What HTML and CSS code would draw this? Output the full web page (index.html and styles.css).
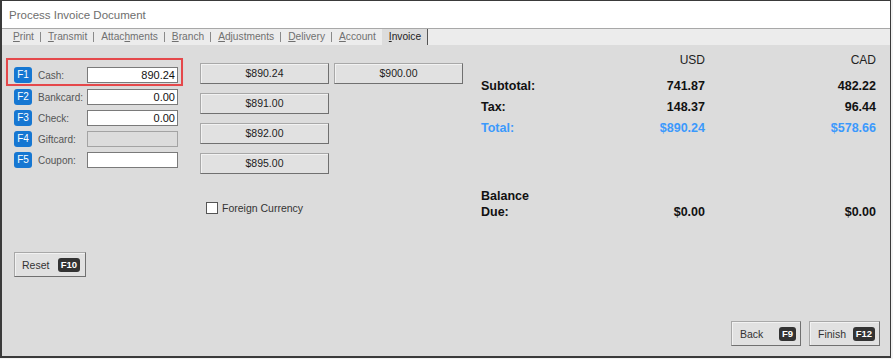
FILE: index.html
```html
<!DOCTYPE html>
<html>
<head>
<meta charset="utf-8">
<link rel="stylesheet" href="styles.css">
</head>
<body>
<div class="window">
  <div class="titlebar">Process Invoice Document</div>
  <div class="tabs">
    <span class="tab"><u>P</u>rint</span><span class="sep"></span>
    <span class="tab"><u>T</u>ransmit</span><span class="sep"></span>
    <span class="tab">Attac<u>h</u>ments</span><span class="sep"></span>
    <span class="tab"><u>B</u>ranch</span><span class="sep"></span>
    <span class="tab"><u>A</u>djustments</span><span class="sep"></span>
    <span class="tab"><u>D</u>elivery</span><span class="sep"></span>
    <span class="tab"><u>A</u>ccount</span>
    <span class="tab active"><u>I</u>nvoice</span>
  </div>
  <div class="pane">
    <div class="main">
      <div class="pay">
        <div class="row hl"><span class="key">F1</span><span class="lbl">Cash:</span><span class="field">890.24</span></div>
        <div class="row"><span class="key">F2</span><span class="lbl">Bankcard:</span><span class="field">0.00</span></div>
        <div class="row"><span class="key">F3</span><span class="lbl">Check:</span><span class="field">0.00</span></div>
        <div class="row"><span class="key">F4</span><span class="lbl">Giftcard:</span><span class="field disabled"></span></div>
        <div class="row"><span class="key">F5</span><span class="lbl">Coupon:</span><span class="field"></span></div>
        <div class="btn reset"><span>Reset</span><span class="kbd">F10</span></div>
      </div>
      <div class="quick">
        <div class="qgrid">
          <div class="btn qbtn">$890.24</div>
          <div class="btn qbtn">$900.00</div>
          <div class="btn qbtn">$891.00</div>
          <div></div>
          <div class="btn qbtn">$892.00</div>
          <div></div>
          <div class="btn qbtn">$895.00</div>
        </div>
        <div class="check"><span class="box"></span><span>Foreign Currency</span></div>
      </div>
      <div class="summary">
        <div class="sgrid head">
          <span></span><span class="num">USD</span><span class="num">CAD</span>
        </div>
        <div class="sgrid line first">
          <span>Subtotal:</span><span class="num">741.87</span><span class="num">482.22</span>
        </div>
        <div class="sgrid line">
          <span>Tax:</span><span class="num">148.37</span><span class="num">96.44</span>
        </div>
        <div class="sgrid line total">
          <span>Total:</span><span class="num">$890.24</span><span class="num">$578.66</span>
        </div>
        <div class="sgrid line balance">
          <span>Balance<br>Due:</span><span class="num">$0.00</span><span class="num">$0.00</span>
        </div>
      </div>
    </div>
    <div class="footer">
      <div class="btn fbtn back"><span>Back</span><span class="kbd">F9</span></div>
      <div class="btn fbtn finish"><span>Finish</span><span class="kbd">F12</span></div>
    </div>
  </div>
</div>
</body>
</html>
```

FILE: styles.css
```css
* { box-sizing: border-box; }
html, body { margin: 0; padding: 0; background: #f3f3f3; }
body { font-family: "Liberation Sans", Arial, sans-serif; }

.window {
  width: 891px;
  height: 358px;
  border: 1px solid #3a3a3a;
  border-left-width: 2px;
  border-bottom-width: 2px;
  display: flex;
  flex-direction: column;
  background: #dcdcdc;
}

.titlebar {
  height: 28px;
  background: #fff;
  border-bottom: 1px solid #a8a8a8;
  color: #6e6e6e;
  font-size: 11.5px;
  padding-left: 7px;
  line-height: 28px;
}

.tabs {
  height: 16px;
  background: #ececec;
  display: flex;
  align-items: center;
  padding-left: 4px;
  font-size: 10.2px;
  color: #707070;
}
.tab { padding: 0 6px 0 7px; line-height: 16px; }
.tab u { text-decoration-thickness: 1px; text-underline-offset: 1px; }
.sep { width: 1px; height: 10px; background: #8a8a8a; }
.tab.active {
  background: #dcdcdc;
  color: #222;
  height: 16px;
  padding: 0 6px 0 7px;
  border-right: 1px solid #555;
}

.pane { flex: 1; display: flex; flex-direction: column; }

.main { display: flex; }

/* payment column */
.pay {
  margin-left: 6px;
  margin-top: 15px;
  width: 173px;
  display: flex;
  flex-direction: column;
  gap: 5px;
}
.row {
  display: flex;
  align-items: center;
  padding: 0 3px 0 6px;
  height: 16px;
  font-size: 10px;
  color: #555;
}
.row.hl {
  height: 24px;
  padding-top: 7px;
  padding-bottom: 1px;
  outline: 2px solid #e5484b;
  box-shadow: 0 0 3px rgba(200, 60, 60, 0.35);
}
.key {
  width: 18px;
  height: 16px;
  border-radius: 3px;
  background: #1677d2;
  color: #fff;
  font-size: 10px;
  line-height: 16px;
  text-align: center;
  flex: none;
}
.lbl { flex: 1; margin-left: 6px; }
.field {
  width: 91px;
  height: 16px;
  border: 1px solid #7a7a7a;
  background: #fff;
  color: #111;
  font-size: 11px;
  line-height: 14px;
  text-align: right;
  padding-right: 2px;
}
.field.disabled { background: #dcdcdc; border-color: #a3a3a3; }

.btn {
  background: #e1e1e1;
  border: 1px solid #a8a8a8;
  border-right-color: #707070;
  border-bottom-color: #707070;
  box-shadow: inset 1px 1px 0 #f2f2f2;
  color: #222;
  font-size: 10.5px;
}

.reset {
  margin-top: 79px;
  margin-left: 6px;
  width: 72px;
  height: 25px;
  display: flex;
  align-items: center;
  justify-content: space-between;
  padding: 0 5px 0 7px;
  color: #333;
}
.kbd {
  background: #333;
  color: #fff;
  border-radius: 3px;
  font-size: 9.5px;
  font-weight: bold;
  height: 14px;
  line-height: 14px;
  padding: 0 3px;
}

/* quick amount buttons */
.quick { margin-left: 19px; margin-top: 18px; }
.qgrid {
  display: grid;
  grid-template-columns: 129px 129px;
  column-gap: 5px;
  row-gap: 9px;
}
.qbtn {
  height: 21px;
  line-height: 19px;
  text-align: center;
}
.check {
  margin-top: 28px;
  margin-left: 6px;
  display: flex;
  align-items: center;
  gap: 4px;
  font-size: 10.5px;
  color: #333;
}
.box {
  width: 12px;
  height: 12px;
  background: #fff;
  border: 1px solid #555;
}

/* summary */
.summary { margin-left: 18px; margin-top: 5px; width: 395px; }
.sgrid {
  display: grid;
  grid-template-columns: 130px 94px 171px;
  font-size: 12px;
  line-height: 21px;
  color: #111;
}
.num { text-align: right; }
.head { color: #222; }
.line { font-weight: bold; font-size: 12.5px; }
.line.first { margin-top: 5px; }
.total { color: #3b99fc; }
.balance { margin-top: 49px; line-height: 16px; align-items: end; }

/* footer */
.footer {
  margin-top: auto;
  display: flex;
  justify-content: flex-end;
  gap: 8px;
  padding: 0 10px 10px 0;
}
.fbtn {
  height: 25px;
  display: flex;
  align-items: center;
  justify-content: space-between;
  padding: 0 4px 0 8px;
  color: #333;
}
.back { width: 70px; }
.finish { width: 71px; }
```
